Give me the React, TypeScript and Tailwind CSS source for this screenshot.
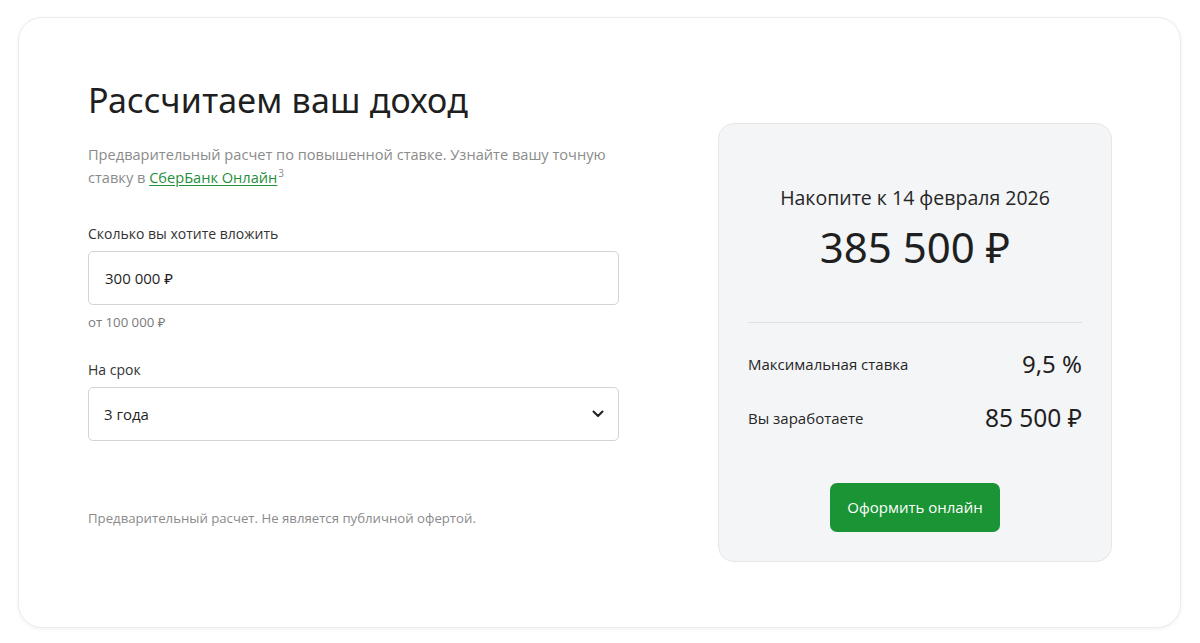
import React from "react";

export default function App() {
  return (
    <div className="w-[1200px] h-[643px] bg-white pt-[17px] pl-[18px]" style={{ fontFamily: '"Open Sans", "Noto Sans", sans-serif' }}>
      <div className="w-[1163px] h-[611px] rounded-[24px] border border-[#ececec] bg-white shadow-[0_1px_4px_rgba(0,0,0,0.06)] flex pl-[69px] pr-[68px]">
        <div className="w-[531px] flex flex-col pt-[60px]">
          <h1 className="text-[34px] leading-[44px] text-[#1f1f1f] tracking-[0.2px]" style={{ fontFamily: '"Noto Sans", sans-serif' }}>Рассчитаем ваш доход</h1>
          <p className="mt-[21px] text-[14.6px] leading-[23px] text-[#8b8b8b]">
            Предварительный расчет по повышенной ставке. Узнайте вашу точную ставку в{" "}
            <a className="text-[#1f8f3a] underline underline-offset-2">СберБанк Онлайн</a>
            <span className="inline-block align-top text-[10px] leading-[14px] ml-px">3</span>
          </p>
          <div className="mt-[35px] text-[14px] leading-[20px] text-[#333]">Сколько вы хотите вложить</div>
          <div className="mt-[7px] h-[54px] rounded-[5px] border border-[#d4d4d4] flex items-center px-[16px] text-[15px] text-[#1f1f1f]">300 000 ₽</div>
          <div className="mt-[8px] text-[13.2px] leading-[18px] text-[#7a7a7a]">от 100 000 ₽</div>
          <div className="mt-[29px] text-[14px] leading-[20px] text-[#333]">На срок</div>
          <div className="mt-[7px] h-[54px] rounded-[5px] border border-[#d4d4d4] flex items-center justify-between pl-[15px] pr-[14px] text-[15px] text-[#1f1f1f]">
            <span>3 года</span>
            <svg width="12" height="8" viewBox="0 0 12 8" fill="none"><path d="M1.5 1.5L6 6L10.5 1.5" stroke="#1f1f1f" strokeWidth="2" strokeLinecap="round" strokeLinejoin="round" /></svg>
          </div>
          <div className="mt-[68px] text-[13.2px] leading-[18px] text-[#8b8b8b]">Предварительный расчет. Не является публичной офертой.</div>
        </div>
        <div className="ml-[99px] mt-[105px] w-[394px] h-[439px] rounded-[16px] border border-[#e6e6e6] bg-[#f4f5f7] flex flex-col px-[29px]">
          <div className="mt-[61px] text-center text-[19.5px] leading-[26px] text-[#262626]">Накопите к 14 февраля 2026</div>
          <div className="mt-[10px] text-center text-[42px] leading-[52px] text-[#1f1f1f]" style={{ fontFamily: '"Noto Sans", sans-serif' }}>385 500 ₽</div>
          <div className="mt-[49px] h-px bg-[#e0e0e0]" />
          <div className="mt-[26px] flex items-center justify-between">
            <span className="text-[15px] text-[#262626]">Максимальная ставка</span>
            <span className="text-[24px] leading-[30px] text-[#1f1f1f]" style={{ fontFamily: '"Noto Sans", sans-serif' }}>9,5 %</span>
          </div>
          <div className="mt-[24px] flex items-center justify-between">
            <span className="text-[15px] text-[#262626]">Вы заработаете</span>
            <span className="text-[24.5px] leading-[30px] text-[#1f1f1f]" style={{ fontFamily: '"Noto Sans", sans-serif' }}>85 500 ₽</span>
          </div>
          <div className="mt-[50px] flex justify-center">
            <button className="w-[170px] h-[49px] rounded-[7px] bg-[#1a9434] text-white text-[15px]">Оформить онлайн</button>
          </div>
        </div>
      </div>
    </div>
  );
}
